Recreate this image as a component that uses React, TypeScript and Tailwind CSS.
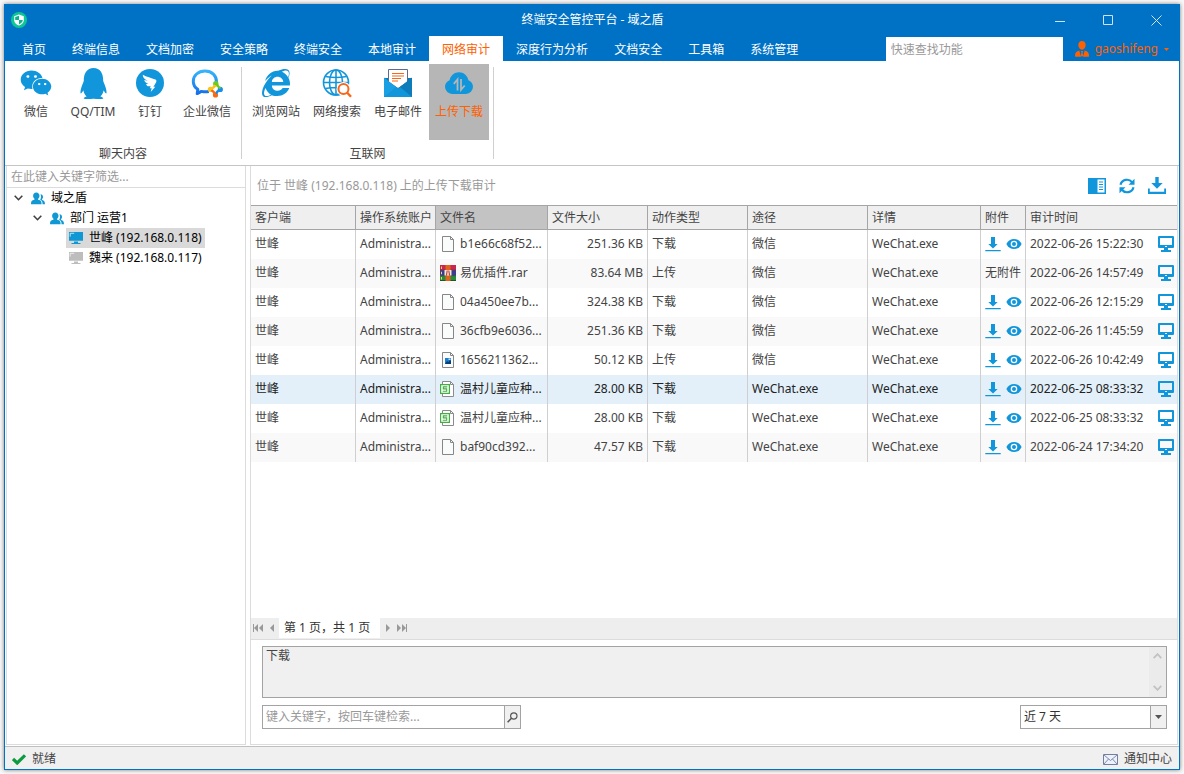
import type { ReactNode } from "react";
import { FaInternetExplorer, FaQq, FaWeixin } from "react-icons/fa";

const menuItems = [
  "首页",
  "终端信息",
  "文档加密",
  "安全策略",
  "终端安全",
  "本地审计",
  "网络审计",
  "深度行为分析",
  "文档安全",
  "工具箱",
  "系统管理",
];
const activeMenu = "网络审计";

type FileKind = "blank" | "rar" | "image" | "sheet";

interface AuditRow {
  kind: FileKind;
  file: string;
  size: string;
  action: string;
  path: string;
  attachment: boolean;
  time: string;
  selected?: boolean;
}

const rows: AuditRow[] = [
  { kind: "blank", file: "b1e66c68f52...", size: "251.36 KB", action: "下载", path: "微信", attachment: true, time: "2022-06-26 15:22:30" },
  { kind: "rar", file: "易优插件.rar", size: "83.64 MB", action: "上传", path: "微信", attachment: false, time: "2022-06-26 14:57:49" },
  { kind: "blank", file: "04a450ee7b...", size: "324.38 KB", action: "下载", path: "微信", attachment: true, time: "2022-06-26 12:15:29" },
  { kind: "blank", file: "36cfb9e6036...", size: "251.36 KB", action: "下载", path: "微信", attachment: true, time: "2022-06-26 11:45:59" },
  { kind: "image", file: "1656211362...", size: "50.12 KB", action: "上传", path: "微信", attachment: true, time: "2022-06-26 10:42:49" },
  { kind: "sheet", file: "温村儿童应种...", size: "28.00 KB", action: "下载", path: "WeChat.exe", attachment: true, time: "2022-06-25 08:33:32", selected: true },
  { kind: "sheet", file: "温村儿童应种...", size: "28.00 KB", action: "下载", path: "WeChat.exe", attachment: true, time: "2022-06-25 08:33:32" },
  { kind: "blank", file: "baf90cd392...", size: "47.57 KB", action: "下载", path: "WeChat.exe", attachment: true, time: "2022-06-24 17:34:20" },
];

function Logo() {
  return (
    <svg viewBox="0 0 16 16" className="size-4">
      <circle cx="8" cy="8" r="8" fill="#0cc795" />
      <path d="M8 2.600 12.800 4.200v4c0 2.600-2.100 4.300-4.800 5.300-2.700-1-4.800-2.700-4.800-5.300v-4z" fill="#fff" />
      <path d="M8 3.800V8H4.200V5zM8 8h3.800c-.1 2.100-1.600 3.400-3.800 4.400z" fill="#0cb48c" />
    </svg>
  );
}

function DingTalkIcon() {
  return (
    <svg viewBox="0 0 28 28" className="size-7">
      <circle cx="14" cy="14" r="14" fill="#1296db" />
      <path
        d="M6.800 5.800c3.500 2 8.700 3.300 12.600 4.700 1.200.5 1.200 1.600.7 2.700-.7 1.600-1.700 3.100-2.700 4.500h1.900l-4.600 5.300 1-3.800h-1.800l.7-2.200c-1.500.4-2.700.5-3.500-.3-.5-.5-.8-1.100-1-1.700l2.500-.2c-2.100-.5-3.800-1.500-4.400-3.700l3.600.6C9.200 10.600 6.900 9.200 6.800 5.800z"
        fill="#fff"
      />
    </svg>
  );
}

function WeComIcon() {
  return (
    <svg viewBox="0 0 32 32" className="size-8">
      <defs>
        <linearGradient id="wecom" x1="0" y1="0" x2="0" y2="1">
          <stop offset="0" stopColor="#36b3fb" />
          <stop offset="1" stopColor="#1670e8" />
        </linearGradient>
      </defs>
      <path
        d="M25.500 15C25.600 8.500 21 4 14 4 7 4 2.300 8.600 2.300 14.200c0 3.600 1.800 6.400 4.500 8.100L6.200 26.600l4.200-2.200c2.500.6 5 .6 7.400.1"
        fill="none"
        stroke="url(#wecom)"
        strokeWidth="3"
        strokeLinejoin="round"
      />
      <circle cx="24.800" cy="16.800" r="2.700" fill="#6ccb1c" />
      <circle cx="29.300" cy="22.400" r="2.600" fill="#178df2" />
      <circle cx="24.500" cy="28" r="2.600" fill="#fb6a13" />
      <circle cx="19.400" cy="22.300" r="2.600" fill="#fcc21b" />
      <path d="M25.500 16.500q1.300 3.500 4 5" stroke="#6ccb1c" strokeWidth="2.400" fill="none" />
      <path d="M29.500 22.800q-3.500 1-4.500 4" stroke="#178df2" strokeWidth="2.400" fill="none" />
      <path d="M24.200 28q-1-3.600-4-4.900" stroke="#fb6a13" strokeWidth="2.400" fill="none" />
      <path d="M19.600 22q3.600-1.300 4.600-4" stroke="#fcc21b" strokeWidth="2.400" fill="none" />
    </svg>
  );
}

function GlobeSearchIcon() {
  return (
    <svg viewBox="0 0 32 32" className="size-8" fill="none">
      <g stroke="#1296db" strokeWidth="1.600">
        <circle cx="15" cy="15.500" r="12.500" />
        <ellipse cx="15" cy="15.500" rx="6.500" ry="12.500" />
        <path d="M15 3v25M2.500 15.500h25M4.500 9.500q10.500 2 21 0M4.500 21.500q10.500-2 21 0" />
      </g>
      <circle cx="22.500" cy="22" r="7" fill="#fff" />
      <circle cx="22.500" cy="22" r="5" stroke="#f8681a" strokeWidth="2" />
      <path d="m26 25.500 4 4.300" stroke="#f8681a" strokeWidth="2.400" />
    </svg>
  );
}

function MailIcon() {
  return (
    <svg viewBox="0 0 32 32" className="size-8">
      <path d="M2 11h28v19H2z" fill="#0d7ab8" />
      <path d="M6.500 2.500h19V15L16 21.500 6.500 15z" fill="#fff" stroke="#5b6b92" />
      <path d="M10 6.500h12M10 9h12M10 11.500h9M10 14h6" stroke="#f8681a" strokeWidth="1.200" />
      <path d="M2 10.500l14 11L2 30z" fill="#1aa0e2" />
      <path d="M30 10.500 16 21.500 30 30z" fill="#0c7cba" />
      <path d="M2 30h28L18 20 16 21.500 14 20z" fill="#1296db" />
    </svg>
  );
}

function CloudIcon() {
  return (
    <svg viewBox="0 0 32 32" className="size-8">
      <path
        d="M9 27a7.200 7.200 0 0 1-7-7.200c0-3.300 2-5.700 4.600-6.600C7.500 8.500 11.300 5.200 16 5.200s8.500 3.300 9.400 8c2.700.9 4.600 3.300 4.600 6.600A7.200 7.200 0 0 1 23 27z"
        fill="#1296db"
      />
      <path d="M14.500 23.500V12.500l-3.700 4.300M18 12v10.800l3.700-4.300" stroke="#b6b6b6" strokeWidth="1.800" fill="none" />
    </svg>
  );
}

function UsersIcon() {
  return (
    <svg viewBox="0 0 14 13" className="h-[13px] w-3.5 shrink-0" fill="#0f98d4">
      <path d="M5.300.4c1.900 0 3.200 1.300 3.200 3.300 0 1.300-.6 2.400-1.400 3-.1.800.2 1.100 1.100 1.400 1.800.6 2.400 1.500 2.400 4.200H0c0-2.700.6-3.600 2.400-4.200.9-.3 1.200-.6 1.100-1.400-.8-.6-1.400-1.700-1.400-3C2.100 1.700 3.400.4 5.300.4z" />
      <path d="M9.500 2.300c1.500 0 2.500 1 2.500 2.600 0 1-.4 1.800-1 2.200-.1.600.1.900.8 1.200 1.500.5 2.200 1.500 2.200 4h-2.400c0-2.500-.6-3.800-2.400-4.600 1-1.200 1.100-3.600.3-5.400z" />
    </svg>
  );
}

function ComputerIcon({ color }: { color: string }) {
  return (
    <svg viewBox="0 0 14 12" className="h-3 w-3.5 shrink-0">
      <path d="M0 0h14v8.700H0zM5 9.500h4V11h2.500v1h-9v-1H5z" fill={color} />
      <path d="M1.200 4.600V1.300h4" stroke="#fff" strokeWidth=".9" fill="none" opacity=".8" />
    </svg>
  );
}

function Chevron() {
  return (
    <svg viewBox="0 0 9 6" className="h-1.5 w-[9px] shrink-0" fill="none" stroke="#404040" strokeWidth="1.600">
      <path d="m.7.7 3.800 4 3.800-4" />
    </svg>
  );
}

function FileIcon({ kind }: { kind: FileKind }) {
  if (kind === "rar") {
    return (
      <svg viewBox="0 0 16 16" className="size-4 shrink-0">
        <path d="M0 0h16v5.300H0z" fill="#c8264d" />
        <path d="M0 5.300h16v5.300H0z" fill="#3e3a98" />
        <path d="M0 10.600h16V16H0z" fill="#2b8b3a" />
        <path d="M0 5.300h16M0 10.600h16M0 15.600h16" stroke="#222" strokeWidth=".6" />
        <path d="M1 1.500h1v2.500H1zM1 6.700h1v2.500H1zM1 12h1v2.500H1z" fill="#f5d76e" />
        <path d="M5.500 0h5v16h-5z" fill="#e0651c" />
        <path d="M4.500 5h7v5.500h-7z" fill="#f3e7dc" />
        <path d="M6.500 10.500 7.200 5.500M9.500 10.500 8.800 5.500" stroke="#b6261d" fill="none" />
      </svg>
    );
  }
  if (kind === "sheet") {
    return (
      <svg viewBox="0 0 16 16" className="size-4 shrink-0">
        <path d="M2.500.5h8l3 3v12h-11z" fill="#fff" stroke="#8b8b8b" />
        <path d="M10.500.5v3h3" fill="none" stroke="#8b8b8b" />
        <path d="M.6 3.600h8.800v8.800H.6z" fill="#fff" stroke="#44ad45" strokeWidth="1.200" />
        <path d="M7.300 5.900H3.300v2h3.400v2.300H2.700" fill="none" stroke="#44ad45" strokeWidth="1.100" />
      </svg>
    );
  }
  return (
    <svg viewBox="0 0 16 16" className="size-4 shrink-0">
      <path d="M2.500.5h8l3 3v12h-11z" fill="#fafbfb" stroke="#878787" />
      <path d="M10.500.5v3h3" fill="none" stroke="#878787" />
      {kind === "image" && (
        <>
          <path d="M5 6h6v6H5z" fill="#1b7fd0" />
          <path d="m5 12 2-3 1.500 1 1.500-2 1 1v3z" fill="#0b3c78" />
          <path d="M8.500 6.500h2v1.500h-2z" fill="#bfe4fa" />
        </>
      )}
    </svg>
  );
}

function DownloadIcon() {
  return (
    <svg viewBox="0 0 16 16" className="size-4" fill="#1296db">
      <path d="M6 1h4v7h2.700L8 12.500 3.300 8H6zM.3 14h15.400v1.200H.3z" />
    </svg>
  );
}

function EyeIcon() {
  return (
    <svg viewBox="0 0 16 16" className="size-4">
      <path d="M.4 8C2 4.700 4.800 3 8 3s6 1.700 7.600 5C14 11.300 11.200 13 8 13S2 11.300.4 8z" fill="#1296db" />
      <circle cx="8" cy="8" r="3.300" fill="#fff" />
      <circle cx="8" cy="8" r="2" fill="#1296db" />
    </svg>
  );
}

function ScreenIcon() {
  return (
    <svg viewBox="0 0 16 16" className="size-4" fill="#1296db">
      <path
        fillRule="evenodd"
        d="M1 0h14a1 1 0 0 1 1 1v10a1 1 0 0 1-1 1H1a1 1 0 0 1-1-1V1a1 1 0 0 1 1-1zM2 2v7h12V2zM7 10v1h2v-1z"
      />
      <path d="M6 12h4v2h3v2H3v-2h3z" />
    </svg>
  );
}

function WindowButton({ label, children }: { label: string; children: ReactNode }) {
  return (
    <button aria-label={label} className="flex h-8 w-12 items-center justify-center">
      <svg viewBox="0 0 11 11" className="size-[11px]" fill="none" stroke="#d3e2f0">
        {children}
      </svg>
    </button>
  );
}

function RibbonButton({
  icon,
  label,
  width,
  active = false,
}: {
  icon: ReactNode;
  label: string;
  width: string;
  active?: boolean;
}) {
  return (
    <button
      className={`flex h-[76px] flex-col items-center gap-[5px] pt-[3px] whitespace-nowrap ${width} ${
        active ? "bg-[#b6b6b6] text-[#ff6000]" : "text-[#444]"
      }`}
    >
      <span className="flex h-8 items-center justify-center text-[#1296db]">{icon}</span>
      <span className="leading-4">{label}</span>
    </button>
  );
}

function RibbonGroup({ title, children }: { title: string; children: ReactNode }) {
  return (
    <section className="flex">
      <div className="flex flex-col px-1 pt-[3px]">
        <div className="flex">{children}</div>
        <h2 className="mt-[5px] text-center leading-[18px]">{title}</h2>
      </div>
      <div className="mt-1.5 mb-1.5 w-px bg-[#d0d0d0]" />
    </section>
  );
}

function PagerButton({ label, path }: { label: string; path: string }) {
  return (
    <button aria-label={label} className="flex h-5 items-center">
      <svg viewBox="0 0 10 8" className="h-2 w-2.5" fill="#999">
        <path d={path} />
      </svg>
    </button>
  );
}

const headCell = "border-r border-[#a5a5a5] px-1 text-left font-normal whitespace-nowrap";
const cell = "border-r border-[#cfcfcf] px-1 pb-0.5 whitespace-nowrap overflow-hidden";

export default function App() {
  return (
    <div className="h-screen min-h-[480px] bg-[#f8f8f8] p-1 font-['Noto_Sans','Noto_Sans_CJK_SC',sans-serif] text-xs text-[#444]">
      <div className="flex h-full flex-col border border-t-0 border-[#0072c6] bg-white shadow-[0_0_4px_rgba(0,0,0,0.5)]">
        <header className="bg-[#0072c6] text-white">
          <div className="-mr-px grid h-8 grid-cols-[1fr_auto_1fr] items-center">
            <div className="pl-1.5">
              <Logo />
            </div>
            <h1 className="leading-4">终端安全管控平台 - 域之盾</h1>
            <div className="flex justify-end">
              <WindowButton label="最小化">
                <path d="M0 6.500h10" />
              </WindowButton>
              <WindowButton label="最大化">
                <path d="M.5.5h9v9h-9z" />
              </WindowButton>
              <WindowButton label="关闭">
                <path d="m.5.500 10 10M10.500.5l-10 10" />
              </WindowButton>
            </div>
          </div>
          <div className="flex h-[25px] pl-1">
            <nav className="flex">
              {menuItems.map((item) => (
                <button
                  key={item}
                  className={`px-[13px] pt-0.5 whitespace-nowrap ${item === activeMenu ? "bg-white text-[#ff6000]" : ""}`}
                >
                  {item}
                </button>
              ))}
            </nav>
            <div className="ml-auto flex items-end pr-2.5">
              <input
                aria-label="快速查找功能"
                placeholder="快速查找功能"
                className="h-6 w-[177px] bg-white px-[5px] text-[#444] outline-none placeholder:text-[#999]"
              />
              <button className="ml-3 flex h-6 items-center gap-1.5 text-[#ff6000]">
                <svg viewBox="0 0 14 16" className="h-4 w-3.5" fill="#ff6000">
                  <path d="M7 0c2.200 0 3.700 1.600 3.700 4.100S9 8.800 7 8.800 3.300 6.600 3.300 4.100 4.800 0 7 0zM4.300 9.500 6 15.800H1c-.8 0-1-.5-1-1.300 0-2.800 1.300-4.300 4.300-5zM9.700 9.500 8 15.800h5c.8 0 1-.5 1-1.300 0-2.800-1.300-4.300-4.300-5zM6 10h2l-.5 1.500.7 3L7 15.800l-1.200-1.300.7-3z" />
                </svg>
                <span>gaoshifeng</span>
                <svg viewBox="0 0 5 3" className="h-[3px] w-[5px]" fill="#ff6000">
                  <path d="M0 0h5L2.500 3z" />
                </svg>
              </button>
            </div>
          </div>
        </header>

        <div className="flex h-[105px] shrink-0 border-b border-[#c6c6c6]">
          <RibbonGroup title="聊天内容">
            <RibbonButton width="w-[54px]" label="微信" icon={<FaWeixin size={32} />} />
            <RibbonButton width="w-[60px]" label="QQ/TIM" icon={<FaQq size={31} />} />
            <RibbonButton width="w-[54px]" label="钉钉" icon={<DingTalkIcon />} />
            <RibbonButton width="w-[60px]" label="企业微信" icon={<WeComIcon />} />
          </RibbonGroup>
          <RibbonGroup title="互联网">
            <div className="flex gap-px">
              <RibbonButton width="w-[60px]" label="浏览网站" icon={<FaInternetExplorer size={28} />} />
              <RibbonButton width="w-[60px]" label="网络搜索" icon={<GlobeSearchIcon />} />
              <RibbonButton width="w-[60px]" label="电子邮件" icon={<MailIcon />} />
              <RibbonButton width="w-[60px]" label="上传下载" icon={<CloudIcon />} active />
            </div>
          </RibbonGroup>
        </div>

        <div className="flex min-h-0 flex-1 gap-1 px-px pb-px">
          <aside className="w-60 shrink-0 border border-t-0 border-[#dcdcdc] text-black">
            <input
              aria-label="筛选"
              placeholder="在此键入关键字筛选..."
              className="block h-[22px] w-full border-b border-[#dcdcdc] px-1 outline-none placeholder:text-[#999]"
            />
            <ul className="leading-5">
              <li>
                <div className="flex h-5 items-center pl-[7px]">
                  <Chevron />
                  <span className="ml-2 flex items-center gap-1.5">
                    <UsersIcon />
                    域之盾
                  </span>
                </div>
                <ul>
                  <li>
                    <div className="flex h-5 items-center pl-[26px]">
                      <Chevron />
                      <span className="ml-2 flex items-center gap-1.5">
                        <UsersIcon />
                        部门 运营1
                      </span>
                    </div>
                    <ul className="flex flex-col items-start pl-[59px]">
                      <li className="flex h-5 items-center gap-1.5 bg-[#d9d9d9] px-[3px]">
                        <ComputerIcon color="#0f98d4" />
                        世峰 (192.168.0.118)
                      </li>
                      <li className="flex h-5 items-center gap-1.5 px-[3px]">
                        <ComputerIcon color="#bdbdbd" />
                        魏来 (192.168.0.117)
                      </li>
                    </ul>
                  </li>
                </ul>
              </li>
            </ul>
          </aside>

          <main className="flex min-w-0 flex-1 flex-col border border-t-0 border-[#dcdcdc]">
            <div className="flex h-[39px] shrink-0 items-center justify-between pr-[11px] pl-1.5">
              <p className="text-[#999]">位于 世峰 (192.168.0.118) 上的上传下载审计</p>
              <div className="flex items-center gap-3">
                <button aria-label="显示列">
                  <svg viewBox="0 0 18 16" className="h-4 w-[18px]">
                    <path d="M0 0h18v16H0z" fill="#1296db" />
                    <path d="M9.500 1.500h7v13h-7z" fill="#fff" />
                    <path d="M11 4h4M11 6.500h4M11 9h4M11 11.500h4" stroke="#1296db" strokeWidth="1.200" />
                  </svg>
                </button>
                <button aria-label="刷新">
                  <svg viewBox="0 0 18 16" className="h-4 w-[18px]" fill="none" stroke="#1296db" strokeWidth="2.200">
                    <path d="M2.500 6.800a6.600 6.600 0 0 1 11.600-2.500M15.500 9.200a6.600 6.600 0 0 1-11.600 2.500" />
                    <path d="M16.500.8v6h-6zM1.500 15.200v-6h6z" fill="#1296db" stroke="none" />
                  </svg>
                </button>
                <button aria-label="导出">
                  <svg viewBox="0 0 18 17" className="h-[17px] w-[18px]" fill="#1296db">
                    <path d="M7.300 0h3.400v6h4L9 11.800 3.300 6h4zM0 11.500h1.800v3.200h14.400v-3.200H18V17H0z" />
                  </svg>
                </button>
              </div>
            </div>

            <div className="min-h-0 flex-1 overflow-hidden">
              <table className="w-full table-fixed border-separate border-spacing-0">
                <colgroup>
                  <col className="w-[105px]" />
                  <col className="w-20" />
                  <col className="w-28" />
                  <col className="w-[100px]" />
                  <col className="w-[100px]" />
                  <col className="w-[120px]" />
                  <col />
                  <col className="w-[45px]" />
                  <col className="w-[151px]" />
                </colgroup>
                <thead>
                  <tr className="h-[25px] bg-[#efefef] [&>th]:border-y">
                    <th className={headCell}>客户端</th>
                    <th className={headCell}>操作系统账户</th>
                    <th className={`${headCell} bg-[#c3c3c3]`}>文件名</th>
                    <th className={headCell}>文件大小</th>
                    <th className={headCell}>动作类型</th>
                    <th className={headCell}>途径</th>
                    <th className={headCell}>详情</th>
                    <th className={headCell}>附件</th>
                    <th className="border-[#a5a5a5] px-1 text-left font-normal">审计时间</th>
                  </tr>
                </thead>
                <tbody>
                  {rows.map((row, index) => (
                    <tr
                      key={index}
                      className={`h-[29px] ${row.selected ? "bg-[#e3f0f9] text-[#222]" : "even:bg-[#f9f9f9]"}`}
                    >
                      <td className={cell}>世峰</td>
                      <td className={cell}>Administra...</td>
                      <td className={cell}>
                        <span className="flex items-center gap-1">
                          <FileIcon kind={row.kind} />
                          {row.file}
                        </span>
                      </td>
                      <td className={`${cell} text-right`}>{row.size}</td>
                      <td className={cell}>{row.action}</td>
                      <td className={cell}>{row.path}</td>
                      <td className={cell}>WeChat.exe</td>
                      <td className={cell}>
                        {row.attachment ? (
                          <span className="flex items-center gap-[5px]">
                            <button aria-label="下载附件">
                              <DownloadIcon />
                            </button>
                            <button aria-label="查看附件">
                              <EyeIcon />
                            </button>
                          </span>
                        ) : (
                          "无附件"
                        )}
                      </td>
                      <td className="pr-[3px] pb-0.5 pl-1 whitespace-nowrap">
                        <span className="flex items-center justify-between">
                          {row.time}
                          <button aria-label="查看屏幕">
                            <ScreenIcon />
                          </button>
                        </span>
                      </td>
                    </tr>
                  ))}
                </tbody>
              </table>
            </div>

            <div className="flex h-[22px] shrink-0 items-start border-b border-[#dcdcdc] bg-[#eee]">
              <div className="flex w-7 gap-1 pl-0.5">
                <PagerButton label="第一页" path="M0 0h1v8H0zM5 0v8L1 4zM10 0v8L6 4z" />
                <PagerButton label="上一页" path="M7 0v8L3 4z" />
              </div>
              <span className="min-w-[101px] bg-white px-[5px] leading-5 text-[#333]">第 1 页，共 1 页</span>
              <div className="flex gap-[5px] pl-0.5">
                <PagerButton label="下一页" path="M4 0v8l4-4z" />
                <PagerButton label="最后一页" path="M0 0v8l4-4zM5 0v8l4-4zM9 0h1v8H9z" />
              </div>
            </div>

            <div className="shrink-0 pt-1.5 pr-2.5 pb-[15px] pl-[11px]">
              <div className="flex h-[52px] border border-[#a3a3a3] bg-[#f0f0f0]">
                <textarea
                  aria-label="详细内容"
                  readOnly
                  defaultValue="下载"
                  className="flex-1 resize-none overflow-hidden px-[3px] leading-[18px] outline-none"
                />
                <div className="flex w-[17px] flex-col items-center justify-between bg-[#ebebeb] py-1.5">
                  <svg viewBox="0 0 9 6" className="h-1.5 w-[9px]" fill="none" stroke="#c2c2c2" strokeWidth="1.800">
                    <path d="m.7 5.200 3.800-4 3.800 4" />
                  </svg>
                  <svg viewBox="0 0 9 6" className="h-1.5 w-[9px]" fill="none" stroke="#c2c2c2" strokeWidth="1.800">
                    <path d="m.7.8 3.800 4 3.800-4" />
                  </svg>
                </div>
              </div>
              <div className="mt-[7px] flex h-6 justify-between">
                <div className="flex w-[259px] border border-[#a3a3a3]">
                  <input
                    aria-label="检索"
                    placeholder="键入关键字，按回车键检索..."
                    className="min-w-0 flex-1 px-[3px] outline-none placeholder:text-[#999]"
                  />
                  <button
                    aria-label="搜索"
                    className="flex w-4 items-center justify-center border-l border-[#a3a3a3] bg-[#f0f0f0]"
                  >
                    <svg viewBox="0 0 11 11" className="size-[11px]" fill="none" stroke="#555" strokeWidth="1.200">
                      <circle cx="6.800" cy="4" r="3.200" />
                      <path d="M4.500 6.300.6 10.200" strokeWidth="1.600" />
                    </svg>
                  </button>
                </div>
                <div className="grid w-[147px] grid-cols-[1fr_16px] border border-[#a3a3a3]">
                  <select
                    aria-label="时间范围"
                    className="col-span-2 col-start-1 row-start-1 appearance-none bg-transparent px-[3px] text-[#333] outline-none"
                  >
                    <option>近 7 天</option>
                  </select>
                  <span className="pointer-events-none col-start-2 row-start-1 flex items-center justify-center border-l border-[#a3a3a3] bg-[#f0f0f0]">
                    <svg viewBox="0 0 7 4" className="h-1 w-[7px]" fill="#555">
                      <path d="M0 0h7L3.500 4z" />
                    </svg>
                  </span>
                </div>
              </div>
            </div>
          </main>
        </div>

        <footer className="flex h-[23px] shrink-0 items-center justify-between border-t border-[#c0c0c0] bg-[#f0f0f0] px-[7px] pt-0.5">
          <span className="flex items-center gap-1.5">
            <svg viewBox="0 0 14 11" className="h-[11px] w-3.5" fill="none" stroke="#0c9b3f" strokeWidth="3.200">
              <path d="m1 5 4.200 4L13 1.300" />
            </svg>
            就绪
          </span>
          <button className="flex items-center gap-1.5">
            <svg viewBox="0 0 15 11" className="h-[11px] w-[15px]">
              <path d="M.5.5h14v10H.5z" fill="#edf1fb" stroke="#747f9f" />
              <path d="m1 1 6.500 5.500L14 1M1 10l4.500-5M14 10 9.500 5" fill="none" stroke="#747f9f" strokeWidth=".9" />
            </svg>
            通知中心
          </button>
        </footer>
      </div>
    </div>
  );
}
